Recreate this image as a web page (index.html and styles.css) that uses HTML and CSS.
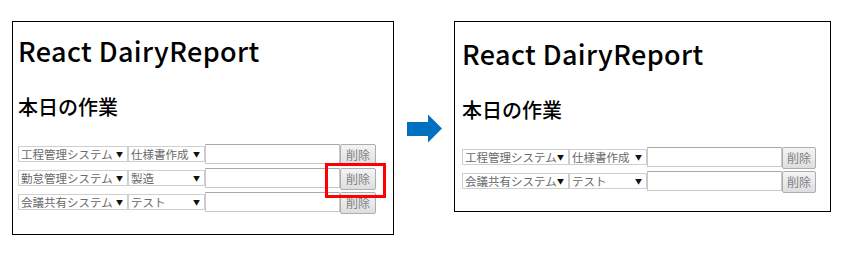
FILE: index.html
```html
<!DOCTYPE html>
<html lang="ja">
<head>
    <meta charset="UTF-8">
    <meta name="viewport" content="width=device-width, initial-scale=1.0">
    <title>React DairyReport</title>
    <link rel="stylesheet" href="styles.css">
</head>
<body>
    <div class="page">
        <div class="panel before">
            <h1 class="title">React DairyReport</h1>
            <h2 class="subtitle">本日の作業</h2>
            <div class="rows">
                <div class="row">
                    <div class="select sys"><span>工程管理システム</span><span class="caret">▼</span></div>
                    <div class="select task"><span>仕様書作成</span><span class="caret">▼</span></div>
                    <div class="text-input"></div>
                    <div class="btn">削除</div>
                </div>
                <div class="row">
                    <div class="select sys"><span>勤怠管理システム</span><span class="caret">▼</span></div>
                    <div class="select task"><span>製造</span><span class="caret">▼</span></div>
                    <div class="text-input"></div>
                    <div class="btn">削除</div>
                </div>
                <div class="row">
                    <div class="select sys"><span>会議共有システム</span><span class="caret">▼</span></div>
                    <div class="select task"><span>テスト</span><span class="caret">▼</span></div>
                    <div class="text-input"></div>
                    <div class="btn">削除</div>
                </div>
            </div>
            <div class="highlight"></div>
        </div>

        <svg class="arrow" width="35" height="29" viewBox="0 0 35 29">
            <rect x="0" y="8" width="21" height="14" fill="#0070c0"/>
            <polygon points="21,0.5 35,14.5 21,28.5" fill="#0070c0"/>
        </svg>

        <div class="panel after">
            <h1 class="title">React DairyReport</h1>
            <h2 class="subtitle">本日の作業</h2>
            <div class="rows">
                <div class="row">
                    <div class="select sys"><span>工程管理システム</span><span class="caret">▼</span></div>
                    <div class="select task"><span>仕様書作成</span><span class="caret">▼</span></div>
                    <div class="text-input"></div>
                    <div class="btn">削除</div>
                </div>
                <div class="row">
                    <div class="select sys"><span>会議共有システム</span><span class="caret">▼</span></div>
                    <div class="select task"><span>テスト</span><span class="caret">▼</span></div>
                    <div class="text-input"></div>
                    <div class="btn">削除</div>
                </div>
            </div>
        </div>
    </div>
</body>
</html>
```

FILE: styles.css
```css
body {
    margin: 0;
    background-color: #fff;
    font-family: "Noto Sans CJK JP", "Noto Sans", sans-serif;
    color: #000;
}
.page {
    display: flex;
    align-items: flex-start;
    padding: 21px 0 0 12px;
}
.panel {
    position: relative;
    box-sizing: border-box;
    border: 1px solid #000;
}
.panel.before {
    width: 382px;
    height: 214px;
    padding: 0 5px;
}
.panel.after {
    width: 377px;
    height: 191px;
    padding: 3px 7px 0;
}
.title {
    margin: 12px 0 0;
    font-size: 27px;
    line-height: 33px;
    font-weight: 500;
    letter-spacing: 0.4px;
}
.subtitle {
    margin: 28px 0 0;
    font-size: 20px;
    line-height: 24px;
    font-weight: 500;
}
.rows {
    display: flex;
    flex-direction: column;
    gap: 2px;
    margin-top: 25px;
}
.row {
    display: flex;
    align-items: flex-start;
}
.select {
    box-sizing: border-box;
    display: flex;
    justify-content: space-between;
    align-items: center;
    height: 16px;
    margin-top: 2px;
    padding: 0 4px 0 2px;
    border: 1px solid #cfcfcf;
    background: #fff;
    color: #6a6a6a;
    font-size: 11.5px;
    line-height: 14px;
    white-space: nowrap;
}
.select.sys {
    width: 110px;
}
.select.task {
    width: 77px;
}
.after .select.sys {
    width: 107px;
}
.after .select.task {
    width: 78px;
}
.caret {
    color: #111;
    font-size: 7px;
}
.text-input {
    box-sizing: border-box;
    width: 135px;
    height: 20px;
    border: 1px solid #c8c8c8;
    border-top-color: #a9a9a9;
    background: #fff;
}
.btn {
    box-sizing: border-box;
    width: 36px;
    height: 22px;
    border: 1px solid #adadad;
    border-radius: 2px;
    background: linear-gradient(#f4f4f4, #dedede);
    color: #808080;
    font-size: 12px;
    line-height: 20px;
    text-align: center;
}
.after .btn {
    width: 34px;
}
.highlight {
    position: absolute;
    left: 312px;
    top: 141px;
    width: 61px;
    height: 35px;
    box-sizing: border-box;
    border: 3px solid #ff0000;
}
.arrow {
    flex: none;
    margin: 93px 12px 0 13px;
}
```
